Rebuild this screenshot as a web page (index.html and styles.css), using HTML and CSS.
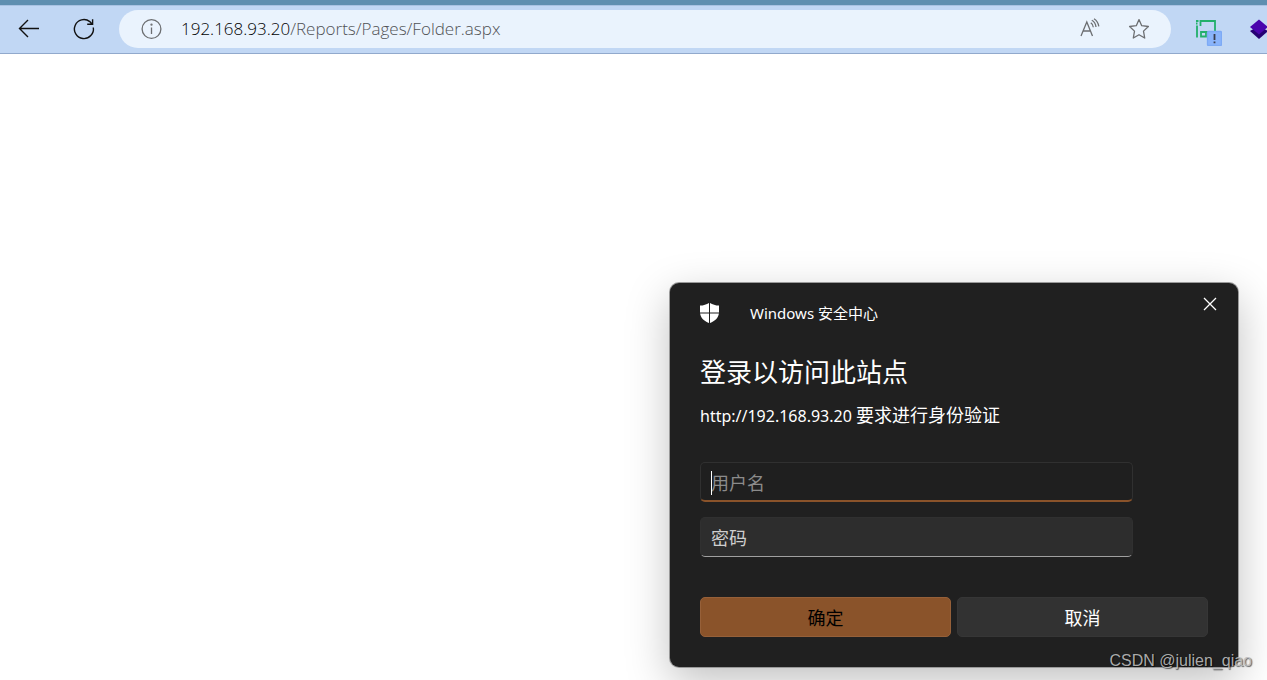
FILE: index.html
```html
<!DOCTYPE html>
<html lang="zh-CN">
<head>
<meta charset="utf-8">
<title>192.168.93.20</title>
<link rel="stylesheet" href="styles.css">
</head>
<body>
<header class="toolbar">
  <button class="tool back" type="button" aria-label="返回">
    <svg width="24" height="24" viewBox="0 0 24 24"><path d="M22 11.500H2.500M11 3L2.500 11.500 11 20"/></svg>
  </button>
  <button class="tool reload" type="button" aria-label="刷新">
    <svg width="24" height="24" viewBox="0 0 24 24"><path d="M21.300 10.500A9.500 9.500 0 1 1 17.800 4.600L20 6.900M20.600 2.200v5h-5.400"/></svg>
  </button>
  <div class="address">
    <button class="tool" type="button" aria-label="站点信息">
      <svg width="22" height="22" viewBox="0 0 22 22"><circle cx="11.500" cy="11" r="9.400"/><path d="M11.500 9.500v6.500"/><circle cx="11.500" cy="6.700" r=".5"/></svg>
    </button>
    <a class="url" href="#"><span class="host">192.168.93.20</span>/Reports/Pages/Folder.aspx</a>
    <button class="tool read" type="button" aria-label="大声朗读">
      <svg width="22" height="22" viewBox="0 0 22 22"><path d="M2 18L7.800 4 13.500 18M4 13h7.500M11.800 4.800c1.500 1 2.400 2.500 2.500 4.500M12.800 2.300c2.300 1.300 3.900 3.600 4.200 6.700M15 .8c2.500 1.600 4.300 4.200 4.800 7.600"/></svg>
    </button>
    <button class="tool" type="button" aria-label="收藏">
      <svg width="22" height="22" viewBox="0 0 22 22"><path stroke-linejoin="round" d="M11 1.600l2.700 6.100 6.700.8-4.900 4.600 1.200 6.900-5.700-3.300L5.300 20l1.200-6.900-4.900-4.600 6.700-.8z"/></svg>
    </button>
  </div>
  <button class="tool" type="button" aria-label="扩展">
    <svg width="30" height="34" viewBox="0 0 30 34">
      <path stroke="#22b06b" stroke-width="1.800" d="M5 25.500V13.500M8.500 14V9H23v11H9v4.500h5v-4M4 9h2.500M4 11.500h1.500"/>
      <rect x="15.500" y="19.500" width="14" height="14" rx="1" fill="#8ab4fb" stroke="#7daaf5"/>
      <path stroke="#3a3d4c" stroke-width="1.800" d="M22.500 22v6M22.500 29.500v1.800"/>
    </svg>
  </button>
  <button class="tool layers" type="button" aria-label="图层扩展">
    <svg width="20" height="22" viewBox="0 0 20 22"><path class="layer-low" d="M1 13l9-5 9 5-9 8z"/><path class="layer-top" d="M1 9l9-7.500L19 9l-9 7.500z"/></svg>
  </button>
</header>
<main class="page">
  <form class="dialog" role="dialog" aria-labelledby="title">
    <div class="caption">
      <svg width="20" height="22" viewBox="0 0 20 22"><path fill="#fff" d="M9 1v9.400H0V3.600C3.500 3.500 6.500 2.600 9 1zM10 1v9.400h9V3.600C15.500 3.500 12.500 2.600 10 1zM.1 11.500H9V21C4 19 .7 16 .1 11.500zM10 11.500h8.900C18.300 16 15 19 10 21z"/></svg>
      <span>Windows 安全中心</span>
    </div>
    <button class="close" type="button" aria-label="关闭">
      <svg width="14" height="14" viewBox="0 0 14 14"><path d="M1 1l12 12M13 1L1 13"/></svg>
    </button>
    <h1 class="title" id="title">登录以访问此站点</h1>
    <p class="message">http://192.168.93.20 <span class="reason">要求进行身份验证</span></p>
    <div class="fields">
      <div class="field active"><input type="text" placeholder="用户名" aria-label="用户名"><span class="caret"></span></div>
      <div class="field"><input type="password" placeholder="密码" aria-label="密码"></div>
    </div>
    <div class="actions">
      <button class="action primary" type="button">确定</button>
      <button class="action" type="button">取消</button>
    </div>
  </form>
  <div class="watermark">CSDN @julien_qiao</div>
</main>
</body>
</html>
```
FILE: styles.css
```css
* {
  box-sizing: border-box;
}

body {
  margin: 0;
  min-height: 100vh;
  display: flex;
  flex-direction: column;
  overflow: hidden;
  background: #fff;
  font-family: "Noto Sans", "Noto Sans CJK SC", sans-serif;
}

button,
input {
  font: inherit;
  border: 0;
  padding: 0;
}

svg {
  display: block;
  flex: none;
}

.toolbar {
  display: flex;
  align-items: center;
  height: 54px;
  padding: 0 0 0 17px;
  overflow: hidden;
  border-top: 5px solid #5f8fb0;
  border-bottom: 1px solid #91a9cc;
  background: #c1d7f4;
  box-shadow: inset 0 1px #a9c2e2;
}

.tool {
  flex: none;
  background: none;
}

.tool svg {
  fill: none;
  stroke: #6c6e71;
  stroke-width: 1.3;
}

.back svg,
.reload svg {
  stroke: #111;
  stroke-width: 1.4;
}

.reload {
  margin: 0 23px 0 31px;
}

.address {
  flex: 1;
  display: flex;
  align-items: center;
  height: 38px;
  margin-right: 21px;
  padding: 0 21px;
  border-radius: 19px;
  background: #eaf3fd;
}

.url {
  flex: 1;
  margin-left: 19px;
  font-family: "Open Sans", "Noto Sans", sans-serif;
  font-size: 17px;
  font-weight: 300;
  line-height: 24px;
  color: #505255;
  text-decoration: none;
}

.host {
  color: #000;
}

.read {
  margin-right: 27px;
}

.layers {
  width: 20px;
  margin: 0 -2px 0 27px;
}

.tool .layer-low {
  fill: #250072;
  stroke: none;
}

.tool .layer-top {
  fill: #4a04ad;
  stroke: none;
}

.page {
  flex: 1;
  position: relative;
}

.dialog {
  position: absolute;
  right: 29px;
  bottom: 13px;
  width: 568px;
  padding: 17px 30px 30px;
  border-radius: 9px;
  background: #202020;
  color: #fff;
  box-shadow: 0 0 0 1px #9a9a9a, 0 14px 44px rgba(0, 0, 0, 0.25);
}

.caption {
  display: flex;
  align-items: center;
  gap: 30px;
  font-size: 15px;
  line-height: 26px;
}

.close {
  position: absolute;
  top: 14px;
  right: 21px;
  background: none;
}

.close svg {
  fill: none;
  stroke: #fff;
  stroke-width: 1.3;
}

.title {
  margin: 28px 0 0;
  font-size: 26px;
  font-weight: 400;
  line-height: 36px;
}

.message {
  margin: 11px 0 0;
  font-size: 16px;
  line-height: 28px;
}

.reason {
  font-size: 18px;
}

.fields {
  display: grid;
  gap: 15px;
  margin-top: 32px;
  padding-right: 75px;
}

.field {
  position: relative;
}

.field input {
  display: block;
  width: 100%;
  height: 40px;
  padding: 2px 10px 0;
  border: 1px solid #303030;
  border-bottom: 1px solid #a0a0a0;
  border-radius: 5px;
  outline: 0;
  background: #2d2d2d;
  color: #fff;
  font-size: 18px;
}

.field input::placeholder {
  color: #cfcfcf;
  opacity: 1;
}

.active input {
  border-bottom: 2px solid #8a532a;
  background: #1f1f1f;
}

.active input::placeholder {
  color: #8b8b8b;
}

.caret {
  position: absolute;
  left: 11px;
  top: 9px;
  width: 1px;
  height: 24px;
  background: #fff;
}

.actions {
  display: grid;
  grid-template-columns: 1fr 1fr;
  gap: 6px;
  margin-top: 40px;
}

.action {
  height: 40px;
  border: 1px solid #363636;
  border-radius: 5px;
  background: #323232;
  color: #fff;
  font-size: 18px;
}

.primary {
  border-color: #966039;
  background: #8a532a;
  color: #000;
}

.watermark {
  position: absolute;
  right: 15px;
  bottom: 9px;
  font-family: "Liberation Sans", sans-serif;
  font-size: 16px;
  line-height: 20px;
  color: rgba(190, 190, 190, 0.9);
  text-shadow: 1px 1px 1px rgba(0, 0, 0, 0.6);
}
```
